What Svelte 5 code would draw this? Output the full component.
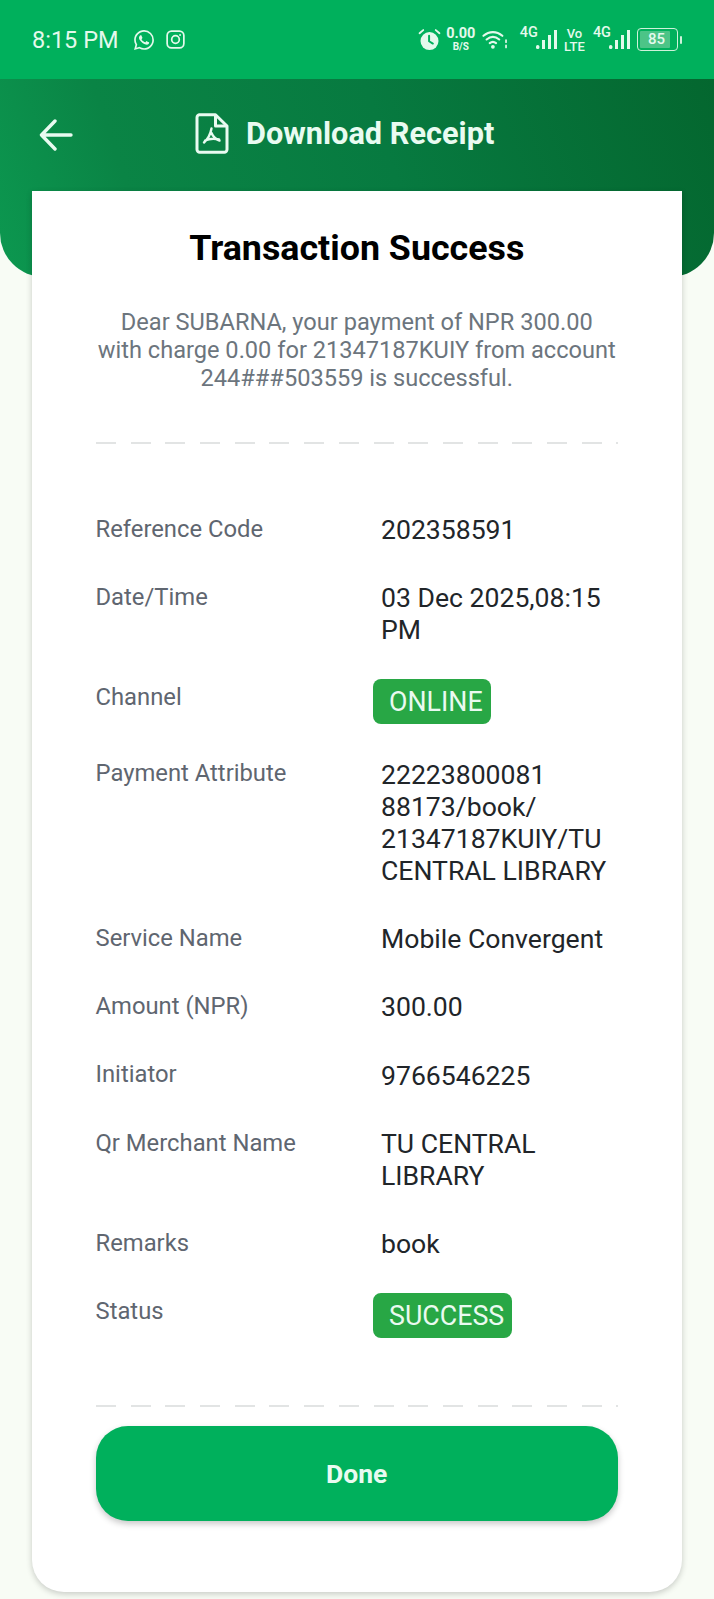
<script>
  const rows = [
    { label: 'Reference Code', lines: ['202358591'] },
    { label: 'Date/Time', lines: ['03 Dec 2025,08:15', 'PM'] },
    { label: 'Channel', badge: 'ONLINE' },
    { label: 'Payment Attribute', lines: ['22223800081', '88173/book/', '21347187KUIY/TU', 'CENTRAL LIBRARY'] },
    { label: 'Service Name', lines: ['Mobile Convergent'] },
    { label: 'Amount (NPR)', lines: ['300.00'] },
    { label: 'Initiator', lines: ['9766546225'] },
    { label: 'Qr Merchant Name', lines: ['TU CENTRAL', 'LIBRARY'] },
    { label: 'Remarks', lines: ['book'] },
    { label: 'Status', badge: 'SUCCESS' }
  ];
</script>

<div class="page">
  <div class="status">
    <div class="left">
      <span class="time">8:15 PM</span>
      <svg class="wa" viewBox="0 0 24 24"><path fill="currentColor" d="M17.472 14.382c-.297-.149-1.758-.867-2.03-.967-.273-.099-.471-.148-.67.15-.197.297-.767.966-.94 1.164-.173.199-.347.223-.644.075-.297-.15-1.255-.463-2.39-1.475-.883-.788-1.48-1.761-1.653-2.059-.173-.297-.018-.458.13-.606.134-.133.298-.347.446-.52.149-.174.198-.298.298-.497.099-.198.05-.371-.025-.52-.075-.149-.669-1.612-.916-2.207-.242-.579-.487-.5-.669-.51-.173-.008-.371-.01-.57-.01-.198 0-.52.074-.792.372-.272.297-1.04 1.016-1.04 2.479 0 1.462 1.065 2.875 1.213 3.074.149.198 2.096 3.2 5.077 4.487.709.306 1.262.489 1.694.625.712.227 1.36.195 1.871.118.571-.085 1.758-.719 2.006-1.413.248-.694.248-1.289.173-1.413-.074-.124-.272-.198-.57-.347m-5.421 7.403h-.004a9.87 9.87 0 01-5.031-1.378l-.361-.214-3.741.982.998-3.648-.235-.374a9.86 9.86 0 01-1.51-5.26c.001-5.45 4.436-9.884 9.888-9.884 2.64 0 5.122 1.03 6.988 2.898a9.825 9.825 0 012.893 6.994c-.003 5.45-4.437 9.884-9.885 9.884m8.413-18.297A11.815 11.815 0 0012.05 0C5.495 0 .16 5.335.157 11.892c0 2.096.547 4.142 1.588 5.945L.057 24l6.305-1.654a11.882 11.882 0 005.683 1.448h.005c6.554 0 11.89-5.335 11.893-11.893a11.821 11.821 0 00-3.48-8.413z"/></svg>
      <svg class="ig" viewBox="0 0 20 20" fill="none" stroke="currentColor" stroke-width="1.8"><rect x="1.2" y="1.2" width="17.6" height="17.6" rx="4.6"/><circle cx="10" cy="10" r="4"/><circle cx="14.8" cy="5.2" r="1" fill="currentColor" stroke="none"/></svg>
    </div>
    <div class="right">
      <svg class="alarm" viewBox="0 0 22 22"><path fill="none" stroke="currentColor" stroke-width="1.8" stroke-linecap="round" d="M1.500 5 5 2M20.500 5 17 2"/><circle cx="11" cy="12.500" r="8.600" fill="currentColor"/><path fill="none" stroke="#00b05c" stroke-width="1.900" stroke-linecap="round" stroke-linejoin="round" d="M10.600 7.500v5.200l3.600 2.200"/></svg>
      <div class="speed"><span class="num">0.00</span><span class="unit">B/S</span></div>
      <svg class="wifi" viewBox="0 0 24 20" fill="none" stroke="currentColor" stroke-linecap="round"><path stroke-width="2" d="M1 6.500C6.500 1.800 13.500 1.800 19 6.500M4 10c3.800-3.200 8.200-3.200 12 0M7 13.400c2-1.600 4-1.600 6 0"/><circle cx="10" cy="17" r="1.800" fill="currentColor" stroke="none"/><path stroke-width="1.600" d="M22.500 10.500v2M22.500 15.500v2"/></svg>
      <div class="net">
        <span class="g">4G</span>
        <svg class="bars" viewBox="0 0 22 21" fill="currentColor"><rect x="0" y="16" width="3.400" height="4" rx="1.600"/><rect x="6" y="11" width="3" height="9"/><rect x="12" y="6" width="3" height="14"/><rect x="18" y="1" width="3" height="19"/></svg>
      </div>
      <div class="volte"><span>Vo</span><span>LTE</span></div>
      <div class="net second">
        <span class="g">4G</span>
        <svg class="bars" viewBox="0 0 22 21" fill="currentColor"><rect x="0" y="16" width="3.400" height="4" rx="1.600"/><rect x="6" y="11" width="3" height="9"/><rect x="12" y="6" width="3" height="14"/><rect x="18" y="1" width="3" height="19"/></svg>
      </div>
      <div class="battery"><div class="cell"><span class="fill">85</span></div><span class="nub"></span></div>
    </div>
  </div>

  <header class="head">
    <svg class="back" viewBox="0 0 34 32" fill="none" stroke="currentColor" stroke-width="3.400" stroke-linecap="round" stroke-linejoin="round"><path d="M32 16H3M16 2 2.500 16 16 30"/></svg>
    <div class="head-title">
      <svg class="pdf" viewBox="0 0 34 41" fill="none" stroke="currentColor"><path stroke-width="3" stroke-linejoin="round" d="M4 1.800h16.500L32 13v23.500a2.700 2.700 0 0 1-2.700 2.700H4.700A2.700 2.700 0 0 1 2 36.500V4.500A2.700 2.700 0 0 1 4.700 1.800z"/><path stroke-width="3" stroke-linejoin="round" d="M20.500 2v11H32"/><path stroke-width="2.400" stroke-linecap="round" stroke-linejoin="round" d="M16.500 15.500c-.8 4.500-3.500 10.500-7.500 14M16.500 20c1.500 3.500 3.500 6 8 7.500M10 27.500c3.500-1.500 8-2.500 14-1"/></svg>
      <span>Download Receipt</span>
    </div>
  </header>

  <main class="card">
    <h1>Transaction Success</h1>
    <p class="msg">Dear SUBARNA, your payment of NPR 300.00<br />with charge 0.00 for 21347187KUIY from account<br />244###503559 is successful.</p>
    <div class="dash top"></div>
    <div class="rows">
      {#each rows as r}
        <div class="row">
          <div class="label">{r.label}</div>
          {#if r.badge}
            <div class="badge-cell"><span class="badge">{r.badge}</span></div>
          {:else}
            <div class="value">{#each r.lines as l}<div>{l}</div>{/each}</div>
          {/if}
        </div>
      {/each}
    </div>
    <div class="dash bottom"></div>
    <button class="done">Done</button>
  </main>
</div>

<style>
  :global(body) { margin: 0; background: #f8fcf5; }
  .page { width: 714px; height: 1599px; overflow: hidden; font-family: Roboto, "Liberation Sans", sans-serif; background: #f8fcf5; }

  .status { height: 79px; background: #00b05c; color: #e4f9ec; display: flex; align-items: center; justify-content: space-between; padding: 0 32px; box-sizing: border-box; }
  .left { display: flex; align-items: center; }
  .time { font-size: 23.500px; width: 102px; }
  .wa { width: 20px; height: 20px; }
  .ig { width: 19px; height: 19px; margin-left: 12px; }
  .right { display: flex; align-items: center; }
  .alarm { width: 23px; height: 23px; }
  .speed { display: flex; flex-direction: column; align-items: center; width: 30px; margin-left: 5px; font-weight: 700; line-height: 1; }
  .num { font-size: 14.500px; }
  .unit { font-size: 10px; }
  .wifi { width: 26px; height: 21px; margin-left: 6px; }
  .net { display: flex; align-items: flex-start; margin-left: 12px; }
  .net.second { margin-left: 8px; }
  .g { font-size: 14.500px; font-weight: 500; line-height: 14px; margin-top: -3px; margin-right: -2px; }
  .bars { width: 22px; height: 21px; }
  .volte { display: flex; flex-direction: column; align-items: center; margin-left: 6px; font-size: 13px; font-weight: 500; line-height: 13px; width: 21px; }
  .battery { display: flex; align-items: center; margin-left: 6px; }
  .cell { width: 41px; height: 23px; box-sizing: border-box; border: 1.800px solid #cdf2da; border-radius: 4px; padding: 2px; display: flex; }
  .fill { width: 27px; background: #4cc487; border-radius: 1px; font-size: 15px; line-height: 16px; font-weight: 500; text-align: center; color: #e4f9ec; padding-left: 3px; box-sizing: content-box; }
  .nub { width: 2px; height: 8px; margin-left: 2px; background: #cdf2da; border-radius: 1px; }

  .head { height: 198px; box-sizing: border-box; background: linear-gradient(72deg, #0c9850 0%, #0a8445 20%, #077a40 55%, #04672f 100%); border-radius: 0 0 44px 44px; color: #e9fbf1; display: flex; align-items: flex-start; padding-top: 36px; }
  .back { width: 34px; height: 32px; margin: 4px 0 0 39px; }
  .head-title { display: flex; align-items: center; margin-left: 122px; margin-top: -2px; font-size: 30.700px; font-weight: 700; }
  .pdf { width: 34px; height: 41px; margin-right: 17px; }

  .card { position: relative; width: 650px; height: 1401px; box-sizing: border-box; margin: -86px 0 0 32px; padding: 0 64px 0 63.500px; background: #fff; border-radius: 0 0 32px 32px; box-shadow: 0 2px 6px rgba(0, 0, 0, .2); display: flow-root; }
  h1 { margin: 33px 0 0; font-size: 35.800px; line-height: 48px; font-weight: 700; text-align: center; color: #000; }
  .msg { margin: 36px -10px 0; font-size: 23.600px; line-height: 28px; text-align: center; color: #6c757d; }
  .dash { height: 2px; background: repeating-linear-gradient(90deg, #e2e4e4 0 20px, transparent 20px 34.700px); }
  .dash.top { margin-top: 50px; }
  .dash.bottom { margin-top: 68px; }

  .rows { display: flex; flex-direction: column; gap: 36.300px; margin-top: 70px; }
  .row { display: grid; grid-template-columns: 285.500px 1fr; }
  .label { font-size: 23.800px; line-height: 30px; margin-top: -0.500px; color: #5f6670; }
  .value { font-size: 26.600px; line-height: 32px; color: #212529; white-space: nowrap; }
  .badge-cell { height: 40px; }
  .badge { display: inline-block; margin: -4px 0 0 -8px; height: 45px; line-height: 46px; padding: 0 8px 0 16px; border-radius: 8px; background: #28a745; color: #eafaf0; font-size: 26.800px; }

  .done { display: block; width: 100%; height: 95px; margin-top: 19px; border: 0; border-radius: 32px; background: #00b05c; color: #e9fbf1; font: 700 26.500px Roboto, "Liberation Sans", sans-serif; box-shadow: 0 3px 6px rgba(0, 0, 0, .22); }
</style>
